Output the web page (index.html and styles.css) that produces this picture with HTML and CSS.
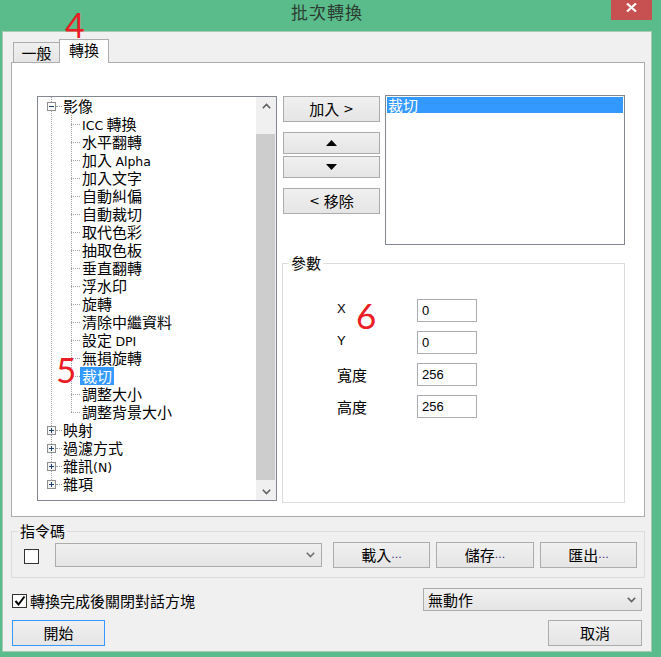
FILE: index.html
```html
<!DOCTYPE html>
<html lang="zh-Hant">
<head>
<meta charset="utf-8">
<title>批次轉換</title>
<link rel="stylesheet" href="styles.css">
</head>
<body>
<div class="window">
  <div class="titlebar">
    <div class="title">批次轉換</div>
    <div class="close">
      <svg width="11" height="9" viewBox="0 0 11 9"><path d="M1 0.5 L10 8.5 M10 0.5 L1 8.5" stroke="#fff" stroke-width="2.2" fill="none"/></svg>
    </div>
  </div>

  <div class="client">
    <div class="tabs">
      <div class="tab">一般</div>
      <div class="tab active">轉換</div>
    </div>

    <div class="panel">
      <div class="tree">
        <div class="tree-view">
          <ul class="root">
            <li>
              <div class="row root-row">
                <svg class="exp" width="9" height="9" viewBox="0 0 9 9"><rect x="0.5" y="0.5" width="8" height="8" fill="#fbfbfb" stroke="#8f8f8f"/><path d="M2 4.5 H7" stroke="#1f3f73"/></svg>
                <span class="hline"></span><span class="label">影像</span>
              </div>
              <ul class="children">
                <li><div class="row child-row"><span class="hline"></span><span class="label"><span class="en">ICC</span> 轉換</span></div></li>
                <li><div class="row child-row"><span class="hline"></span><span class="label">水平翻轉</span></div></li>
                <li><div class="row child-row"><span class="hline"></span><span class="label">加入 <span class="en">Alpha</span></span></div></li>
                <li><div class="row child-row"><span class="hline"></span><span class="label">加入文字</span></div></li>
                <li><div class="row child-row"><span class="hline"></span><span class="label">自動糾偏</span></div></li>
                <li><div class="row child-row"><span class="hline"></span><span class="label">自動裁切</span></div></li>
                <li><div class="row child-row"><span class="hline"></span><span class="label">取代色彩</span></div></li>
                <li><div class="row child-row"><span class="hline"></span><span class="label">抽取色板</span></div></li>
                <li><div class="row child-row"><span class="hline"></span><span class="label">垂直翻轉</span></div></li>
                <li><div class="row child-row"><span class="hline"></span><span class="label">浮水印</span></div></li>
                <li><div class="row child-row"><span class="hline"></span><span class="label">旋轉</span></div></li>
                <li><div class="row child-row"><span class="hline"></span><span class="label">清除中繼資料</span></div></li>
                <li><div class="row child-row"><span class="hline"></span><span class="label">設定 <span class="en">DPI</span></span></div></li>
                <li><div class="row child-row"><span class="hline"></span><span class="label">無損旋轉</span></div></li>
                <li><div class="row child-row"><span class="hline"></span><span class="label sel">裁切</span></div></li>
                <li><div class="row child-row"><span class="hline"></span><span class="label">調整大小</span></div></li>
                <li><div class="row child-row"><span class="hline"></span><span class="label">調整背景大小</span></div></li>
              </ul>
            </li>
            <li>
              <div class="row root-row">
                <svg class="exp" width="9" height="9" viewBox="0 0 9 9"><rect x="0.5" y="0.5" width="8" height="8" fill="#f4f4f4" stroke="#8f8f8f"/><path d="M2 4.5 H7 M4.5 2 V7" stroke="#1f3f73"/></svg>
                <span class="hline"></span><span class="label">映射</span>
              </div>
            </li>
            <li>
              <div class="row root-row">
                <svg class="exp" width="9" height="9" viewBox="0 0 9 9"><rect x="0.5" y="0.5" width="8" height="8" fill="#f4f4f4" stroke="#8f8f8f"/><path d="M2 4.5 H7 M4.5 2 V7" stroke="#1f3f73"/></svg>
                <span class="hline"></span><span class="label">過濾方式</span>
              </div>
            </li>
            <li>
              <div class="row root-row">
                <svg class="exp" width="9" height="9" viewBox="0 0 9 9"><rect x="0.5" y="0.5" width="8" height="8" fill="#f4f4f4" stroke="#8f8f8f"/><path d="M2 4.5 H7 M4.5 2 V7" stroke="#1f3f73"/></svg>
                <span class="hline"></span><span class="label">雜訊<span class="en">(N)</span></span>
              </div>
            </li>
            <li>
              <div class="row root-row">
                <svg class="exp" width="9" height="9" viewBox="0 0 9 9"><rect x="0.5" y="0.5" width="8" height="8" fill="#f4f4f4" stroke="#8f8f8f"/><path d="M2 4.5 H7 M4.5 2 V7" stroke="#1f3f73"/></svg>
                <span class="hline"></span><span class="label">雜項</span>
              </div>
            </li>
          </ul>
        </div>
        <div class="scrollbar">
          <div class="sb-btn">
            <svg width="9" height="6" viewBox="0 0 9 6"><path d="M0.8 5.2 L4.5 1.5 L8.2 5.2" stroke="#606060" stroke-width="1.6" fill="none"/></svg>
          </div>
          <div class="sb-track"><div class="sb-thumb"></div></div>
          <div class="sb-btn">
            <svg width="9" height="6" viewBox="0 0 9 6"><path d="M0.8 0.8 L4.5 4.5 L8.2 0.8" stroke="#606060" stroke-width="1.6" fill="none"/></svg>
          </div>
        </div>
      </div>

      <div class="right">
        <div class="top">
          <div class="btn-col">
            <button class="btn btn-add">加入 <span class="en">&gt;</span></button>
            <button class="btn btn-arrow btn-up"><svg width="11" height="6" viewBox="0 0 11 6"><path d="M0 6 L5.5 0 L11 6 Z" fill="#000"/></svg></button>
            <button class="btn btn-arrow btn-down"><svg width="11" height="6" viewBox="0 0 11 6"><path d="M0 0 L11 0 L5.5 6 Z" fill="#000"/></svg></button>
            <button class="btn btn-remove"><span class="en">&lt;</span> 移除</button>
          </div>
          <div class="listbox">
            <div class="list-item sel">裁切</div>
          </div>
        </div>

        <fieldset class="group params">
          <legend>參數</legend>
          <div class="param-grid">
            <span class="plabel en-label">X</span><input class="field" type="text" value="0" readonly>
            <span class="plabel en-label">Y</span><input class="field" type="text" value="0" readonly>
            <span class="plabel">寬度</span><input class="field" type="text" value="256" readonly>
            <span class="plabel">高度</span><input class="field" type="text" value="256" readonly>
          </div>
        </fieldset>
      </div>
    </div>

    <fieldset class="group script">
      <legend>指令碼</legend>
      <div class="script-row">
        <span class="checkbox"></span>
        <div class="combo combo-script">
          <span></span>
          <svg width="9" height="6" viewBox="0 0 9 6"><path d="M0.8 0.8 L4.5 4.5 L8.2 0.8" stroke="#707070" stroke-width="1.6" fill="none"/></svg>
        </div>
        <button class="btn btn-file">載入<span class="en">...</span></button>
        <button class="btn btn-file btn-save">儲存<span class="en">...</span></button>
        <button class="btn btn-file">匯出<span class="en">...</span></button>
      </div>
    </fieldset>

    <div class="options-row">
      <label class="check">
        <span class="checkbox checked"><svg width="12" height="12" viewBox="0 0 12 12"><path d="M1.5 6 L4.5 9.5 L10.5 1.5" stroke="#000" stroke-width="2" fill="none"/></svg></span>
        <span>轉換完成後關閉對話方塊</span>
      </label>
      <div class="combo combo-action">
        <span>無動作</span>
        <svg width="9" height="6" viewBox="0 0 9 6"><path d="M0.8 0.8 L4.5 4.5 L8.2 0.8" stroke="#606060" stroke-width="1.6" fill="none"/></svg>
      </div>
    </div>

    <div class="action-row">
      <button class="btn btn-start">開始</button>
      <button class="btn btn-cancel">取消</button>
    </div>
  </div>

  <div class="mark m4">4</div>
  <div class="mark m5">5</div>
  <div class="mark m6">6</div>
</div>
</body>
</html>
```

FILE: styles.css
```css
* {
  box-sizing: border-box;
}

html,
body {
  margin: 0;
  padding: 0;
}

body {
  width: 661px;
  height: 657px;
  overflow: hidden;
  background: #59bc8a;
  font-family: "Noto Sans CJK TC", "Noto Sans CJK SC", sans-serif;
  font-size: 15px;
  color: #000;
}

.window {
  position: relative;
  width: 661px;
  height: 657px;
  background: #59bc8a;
}

/* ---------- title bar ---------- */
.titlebar {
  height: 31px;
  display: grid;
  grid-template-columns: 1fr auto 1fr;
}

.title {
  grid-column: 2;
  font-size: 17px;
  line-height: 23px;
  letter-spacing: 1px;
  color: #2c3a31;
  margin-right: 7px;
}

.close {
  grid-column: 3;
  justify-self: end;
  align-self: start;
  width: 41px;
  height: 20px;
  margin-right: 9px;
  background: #c75050;
  display: flex;
  justify-content: center;
  align-items: flex-start;
  padding-top: 3px;
}

/* ---------- client ---------- */
.client {
  margin: 0 9px 0 2px;
  height: 621px;
  border: 1px solid #a5cbb4;
  background: #f0f0f0;
  padding: 7px 6px 0 8px;
}

.en {
  font-family: "DejaVu Sans", sans-serif;
  font-size: 12.5px;
}

/* ---------- tabs ---------- */
.tabs {
  display: flex;
  align-items: flex-end;
  height: 23px;
  padding-left: 2px;
}

.tab {
  width: 47px;
  height: 20px;
  border: 1px solid #acacac;
  border-bottom: 0;
  background: linear-gradient(#f0f0f0, #e5e5e5);
  text-align: center;
  line-height: 19px;
}

.tab.active {
  width: 50px;
  height: 24px;
  margin-bottom: -1px;
  margin-left: -1px;
  background: #fff;
  position: relative;
  z-index: 1;
}

/* ---------- panel ---------- */
.panel {
  height: 455px;
  border: 1px solid #acacac;
  background: #fff;
  display: flex;
  gap: 5px;
  padding: 33px 0 0 25px;
}

/* ---------- tree ---------- */
.tree {
  width: 240px;
  height: 405px;
  border: 1px solid #828790;
  display: flex;
  flex: none;
}

.tree-view {
  flex: 1;
}

.tree-view ul {
  list-style: none;
  margin: 0;
  padding: 0;
}

.root > li {
  background: repeating-linear-gradient(to bottom, #a0a0a0 0 1px, transparent 1px 2px) 13px 0 / 1px 100% no-repeat;
}

.root > li:last-child {
  background-size: 1px 9px;
}

.children > li {
  background: repeating-linear-gradient(to bottom, #a0a0a0 0 1px, transparent 1px 2px) 33px 0 / 1px 100% no-repeat;
}

.children > li:last-child {
  background-size: 1px 9px;
}

.row {
  height: 18px;
  display: flex;
  align-items: center;
  line-height: 18px;
  white-space: nowrap;
}

.exp {
  display: block;
  flex: none;
  margin-left: 9px;
}

.hline {
  flex: none;
  height: 0;
  border-top: 1px dotted #a0a0a0;
}

.root-row .hline {
  width: 6px;
}

.child-row .hline {
  width: 9px;
  margin-left: 33px;
}

.label {
  padding: 0 2px;
  height: 18px;
}

.root-row .label {
  padding-left: 1px;
}

.label.sel {
  background: #3399ff;
  color: #fff;
}

/* scrollbar */
.scrollbar {
  width: 20px;
  flex: none;
  background: #f0f0f0;
  display: flex;
  flex-direction: column;
}

.sb-btn {
  height: 17px;
  flex: none;
  display: flex;
  align-items: center;
  justify-content: center;
}

.sb-track {
  flex: 1;
  display: flex;
  padding: 20px 1px 3px 0;
}

.sb-thumb {
  flex: 1;
  background: #cdcdcd;
}

/* ---------- right column ---------- */
.right {
  width: 343px;
  margin-top: -1px;
  display: flex;
  flex-direction: column;
}

.top {
  display: flex;
  gap: 5px;
}

.btn {
  font: inherit;
  color: #000;
  padding: 0;
  margin: 0;
  border: 1px solid #acacac;
  background: linear-gradient(#f0f0f0, #e5e5e5);
  line-height: 18px;
  display: flex;
  align-items: center;
  justify-content: center;
}

.btn-col {
  width: 97px;
  margin-left: 1px;
  margin-top: 1px;
  display: flex;
  flex-direction: column;
}

.btn-add,
.btn-remove {
  height: 26px;
}

.btn-add .en {
  margin-left: 4px;
}

.btn-remove .en {
  margin-right: 4px;
}

.btn-arrow {
  height: 22px;
}

.btn-up {
  margin-top: 10px;
}

.btn-down {
  margin-top: 2px;
}

.btn-remove {
  margin-top: 10px;
}

.listbox {
  width: 240px;
  height: 150px;
  border: 1px solid #828790;
  background: #fff;
  padding: 1px;
}

.list-item {
  height: 16px;
  line-height: 16px;
  padding-left: 1px;
}

.list-item.sel {
  background: #3399ff;
  color: #fff;
}

/* ---------- group boxes ---------- */
.group {
  margin: 0;
  min-width: 0;
  border: 1px solid #dcdcdc;
}

.group legend {
  padding: 0 2px;
  line-height: 18px;
}

.params {
  margin-top: 9px;
  height: 249px;
  padding: 27px 0 0 6px;
}

.param-grid {
  margin-left: 48px;
  display: grid;
  grid-template-columns: 80px 60px;
  grid-auto-rows: 23px;
  row-gap: 9px;
  align-items: center;
}

.plabel {
  line-height: 18px;
}

.en-label {
  font-family: "Liberation Sans", sans-serif;
  font-size: 13px;
  margin-top: -4px;
}

.field {
  width: 60px;
  height: 23px;
  margin: 0;
  border: 1px solid #abadb3;
  background: #fff;
  padding: 0 0 0 4px;
  font-family: "Liberation Sans", sans-serif;
  font-size: 13px;
  color: #000;
  outline: none;
}

/* script group */
.script {
  margin-top: 5px;
  padding: 2px 6px 9px 6px;
}

.script-row {
  display: flex;
  align-items: center;
  height: 26px;
}

.checkbox {
  display: flex;
  align-items: center;
  justify-content: center;
  flex: none;
  width: 15px;
  height: 15px;
  border: 1px solid #333;
  background: #fff;
}

.script-row .checkbox {
  margin-left: 6px;
  margin-top: 3px;
}

.combo {
  display: flex;
  align-items: center;
  justify-content: space-between;
  border: 1px solid #acacac;
  background: linear-gradient(#f0f0f0, #e5e5e5);
}

.combo-script {
  width: 267px;
  height: 24px;
  margin-left: 16px;
  padding-right: 6px;
}

.btn-file {
  width: 97px;
  height: 26px;
  margin-left: 11px;
}

.btn-file + .btn-file {
  margin-left: 6px;
}

.btn-save {
  width: 98px;
}

.btn-file .en {
  font-size: 11px;
  color: #3a2c7a;
}

/* options row */
.options-row {
  margin-top: 10px;
  height: 23px;
  display: flex;
  align-items: center;
  justify-content: space-between;
  padding: 0 3px 0 1px;
}

.check {
  display: flex;
  align-items: center;
  gap: 3px;
  line-height: 18px;
  margin-top: 2px;
}

.checkbox.checked {
  width: 15px;
  height: 14px;
}

.combo-action {
  width: 219px;
  height: 23px;
  padding: 0 5px 0 4px;
}

/* action row */
.action-row {
  margin-top: 9px;
  display: flex;
  justify-content: space-between;
  padding: 0 3px 0 1px;
}

.btn-start {
  width: 93px;
  height: 26px;
  border-color: #3399ff;
}

.btn-cancel {
  width: 94px;
  height: 26px;
}

/* ---------- annotation numbers ---------- */
.mark {
  position: absolute;
  font-family: "Lato", sans-serif;
  color: #ec1c24;
  line-height: 1;
}

.m4 {
  left: 65px;
  top: 8px;
  font-size: 34px;
}

.m5 {
  left: 56px;
  top: 352px;
  font-size: 35px;
}

.m6 {
  left: 356px;
  top: 298px;
  font-size: 35px;
}
```
